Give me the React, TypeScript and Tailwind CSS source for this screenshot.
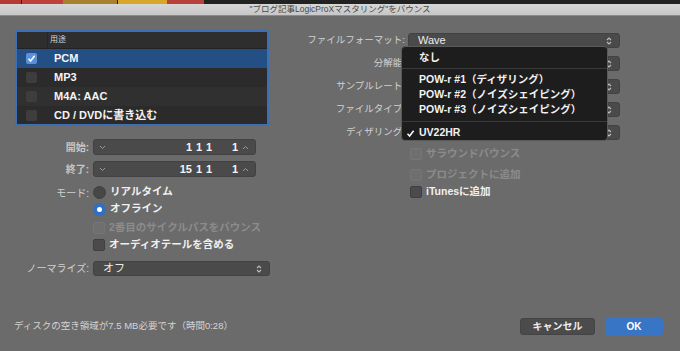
import React from "react";

const FONT = { fontFamily: '"Liberation Sans", "Noto Sans CJK JP", sans-serif' };

const FORMATS = [
  { id: 1, name: "PCM", checked: true },
  { id: 2, name: "MP3", checked: false },
  { id: 3, name: "M4A: AAC", checked: false },
  { id: 4, name: "CD / DVDに書き込む", checked: false },
];

function UpDown({ className = "" }: { className?: string }) {
  return (
    <svg width="6" height="10" viewBox="0 0 6 10" className={className}>
      <path d="M1 4 L3 2 L5 4 M1 6 L3 8 L5 6" stroke="currentColor" strokeWidth="1.1" fill="none" />
    </svg>
  );
}

function Check({ className = "" }: { className?: string }) {
  return (
    <svg width="9" height="9" viewBox="0 0 9 9" className={className}>
      <path d="M1.5 4.8 L3.6 7 L7.6 1.8" stroke="currentColor" strokeWidth="1.5" fill="none" />
    </svg>
  );
}

function Select({ value, width }: { value?: string; width: string }) {
  return (
    <div className={`h-[15px] ${width} rounded-[3px] bg-[#4a4a4a] border border-[#424242] flex items-center justify-between pl-[9px] pr-[4px]`}>
      <span className="text-[11px] text-[#ececec]">{value}</span>
      <span className="w-[12px] h-[13px] flex items-center justify-center text-[#bdbdbd]">
        <UpDown />
      </span>
    </div>
  );
}

function Box({ disabled = false }: { disabled?: boolean }) {
  return (
    <span
      className={`w-[12px] h-[12px] rounded-[2px] shrink-0 ${
        disabled ? "bg-[#6f6f6f] border border-[#767676]" : "bg-[#4b4b4b] border border-[#3f3f3f]"
      }`}
    />
  );
}

function CheckRow({ label, disabled = false }: { label: string; disabled?: boolean }) {
  return (
    <div className="flex items-center gap-[4px] h-[16px]">
      <Box disabled={disabled} />
      <span className={`text-[10.5px] font-bold ${disabled ? "text-[#8c8c8c]" : "text-[#f0f0f0]"}`}>{label}</span>
    </div>
  );
}

function Stepper({ bar }: { bar: string }) {
  return (
    <div className="h-[16px] w-[163px] rounded-[3px] bg-[#4a4a4a] border border-[#424242] flex items-center pl-[5px] pr-[3px]">
      <svg width="7" height="5" viewBox="0 0 7 5" className="text-[#9a9a9a]">
        <path d="M1 1 L3.5 3.5 L6 1" stroke="currentColor" strokeWidth="1" fill="none" />
      </svg>
      <div className="flex-1 flex justify-end text-[11px] font-bold text-[#f4f4f4]">
        <span className="w-[20px] text-right">{bar}</span>
        <span className="w-[10px] text-right">1</span>
        <span className="w-[10px] text-right">1</span>
        <span className="w-[26px] text-right">1</span>
      </div>
      <span className="w-[14px] flex justify-center text-[#9a9a9a]">
        <svg width="7" height="5" viewBox="0 0 7 5">
          <path d="M1 4 L3.5 1.5 L6 4" stroke="currentColor" strokeWidth="1" fill="none" />
        </svg>
      </span>
    </div>
  );
}

function Radio({ on, label }: { on: boolean; label: string }) {
  return (
    <div className="flex items-center gap-[4px] h-[16px]">
      {on ? (
        <span className="w-[13px] h-[13px] rounded-full bg-[#2f6fc4] flex items-center justify-center">
          <span className="w-[5px] h-[5px] rounded-full bg-white" />
        </span>
      ) : (
        <span className="w-[13px] h-[13px] rounded-full bg-[#474747] border border-[#3f3f3f]" />
      )}
      <span className="text-[10.5px] font-bold text-[#f0f0f0]">{label}</span>
    </div>
  );
}

const RIGHT_ROWS = [
  { label: "ファイルフォーマット:", value: "Wave" },
  { label: "分解能:", value: "" },
  { label: "サンプルレート:", value: "" },
  { label: "ファイルタイプ:", value: "" },
  { label: "ディザリング:", value: "" },
];

export default function App() {
  return (
    <div style={FONT} className="w-[680px] h-[351px] bg-[#6b6b6b] relative overflow-hidden flex flex-col">
      {/* window strip behind */}
      <div className="h-[4px] flex bg-[#222]">
        <div className="w-[21px] bg-[#b53a33]" />
        <div className="w-[1px]" />
        <div className="w-[41px] bg-[#c0413a]" />
        <div className="w-[54px] bg-[#a8812e]" />
        <div className="w-[1px]" />
        <div className="w-[49px] bg-[#d8a629]" />
        <div className="w-[37px] bg-[#b8413a]" />
      </div>
      {/* title bar */}
      <div className="h-[12px] bg-gradient-to-b from-[#d6d6d6] to-[#c7c7c7] border-b border-[#8a8a8a] flex items-center justify-center">
        <span className="text-[8.5px] text-[#4a4a4a] leading-none">"ブログ記事LogicProXマスタリング"をバウンス</span>
      </div>

      <div className="flex flex-1">
        {/* left column */}
        <div className="ml-[15px] mt-[14px] w-[256px] flex flex-col">
          <div className="w-[254px] h-[96px] border-2 border-[#3d6fb6] rounded-[2px] bg-[#2c2c2c] overflow-hidden">
            <div className="h-[17px] flex items-center border-b border-[#222] bg-[#2e2e2e]">
              <span className="w-[31px] h-full border-r border-[#262626]" />
              <span className="ml-[2px] text-[8px] text-[#d8d8d8]">用途</span>
            </div>
            {FORMATS.map((f, i) => (
              <div
                key={f.id}
                className={`h-[19px] flex items-center ${
                  f.checked ? "bg-[#234f84]" : i % 2 === 0 ? "bg-[#303030]" : "bg-[#2b2b2b]"
                }`}
              >
                <span className="w-[28px] flex justify-center">
                  {f.checked ? (
                    <span className="w-[11px] h-[11px] rounded-[2px] bg-[#5b8fd6] flex items-center justify-center text-white">
                      <Check />
                    </span>
                  ) : (
                    <span className="w-[11px] h-[11px] rounded-[2px] bg-[#3d3d3d]" />
                  )}
                </span>
                <span className="ml-[9px] text-[11px] font-bold text-[#f4f4f4]">{f.name}</span>
              </div>
            ))}
          </div>

          <div className="mt-[13px] grid grid-cols-[74px_1fr] gap-x-[4px] items-center">
            <span className="text-right text-[10px] font-bold text-[#c6c6c6]">開始:</span>
            <Stepper bar="1" />
            <span className="mt-[6px] text-right text-[10px] font-bold text-[#c6c6c6]">終了:</span>
            <div className="mt-[6px]">
              <Stepper bar="15" />
            </div>
            <span className="mt-[7px] text-right text-[10px] text-[#d0d0d0] self-start pt-[2px]">モード:</span>
            <div className="mt-[7px] flex flex-col gap-[1px]">
              <Radio on={false} label="リアルタイム" />
              <Radio on={true} label="オフライン" />
              <div className="mt-[2px]">
                <CheckRow label="2番目のサイクルパスをバウンス" disabled />
              </div>
              <CheckRow label="オーディオテールを含める" />
            </div>
            <span className="mt-[8px] text-right text-[10px] text-[#d0d0d0]">ノーマライズ:</span>
            <div className="mt-[8px]">
              <Select value="オフ" width="w-[177px]" />
            </div>
          </div>
        </div>

        {/* right column */}
        <div className="ml-[29px] mt-[17px] flex flex-col">
          <div className="flex flex-col gap-[8px]">
            {RIGHT_ROWS.map((r) => (
              <div key={r.label} className="flex items-center">
                <span className="w-[105px] text-right text-[9.5px] text-[#d2d2d2]">{r.label}</span>
                <span className="ml-[3px]">
                  <Select value={r.value} width="w-[212px]" />
                </span>
              </div>
            ))}
          </div>
          <div className="ml-[110px] mt-[6px] flex flex-col">
            <CheckRow label="サラウンドバウンス" disabled />
            <div className="mt-[5px]">
              <CheckRow label="プロジェクトに追加" disabled />
            </div>
            <div className="mt-[1px]">
              <CheckRow label="iTunesに追加" />
            </div>
          </div>
        </div>
      </div>

      {/* footer */}
      <div className="h-[17px] mb-[16px] flex items-center pl-[14px] pr-[17px]">
        <span className="text-[9.5px] text-[#d4d4d4]">ディスクの空き領域が7.5 MB必要です（時間0:28）</span>
        <div className="ml-auto flex gap-[10px]">
          <button className="w-[75px] h-[17px] rounded-[3px] bg-[#4b4b4b] border border-[#444] text-[10px] font-bold text-[#eeeeee]">
            キャンセル
          </button>
          <button className="w-[58px] h-[17px] rounded-[3px] bg-[#3875c4] text-[10px] font-bold text-white">OK</button>
        </div>
      </div>

      {/* dither pop-up menu */}
      <div className="absolute left-[401px] top-[46px] w-[207px] h-[95px] rounded-[4px] bg-[#1d1d1d] border border-[#5a5a5a] pt-[4px] text-[10.5px] font-bold text-[#f2f2f2]">
        <div className="h-[14px] pl-[17px] flex items-center">なし</div>
        <div className="my-[3px] border-t border-[#3a3a3a]" />
        <div className="h-[15px] pl-[17px] flex items-center">POW-r #1（ディザリング）</div>
        <div className="h-[15px] pl-[17px] flex items-center">POW-r #2（ノイズシェイピング）</div>
        <div className="h-[15px] pl-[17px] flex items-center">POW-r #3（ノイズシェイピング）</div>
        <div className="my-[4px] border-t border-[#3a3a3a]" />
        <div className="h-[14px] pl-[4px] flex items-center gap-[3px]">
          <Check className="text-white" />
          <span className="ml-[1px]">UV22HR</span>
        </div>
      </div>
    </div>
  );
}
